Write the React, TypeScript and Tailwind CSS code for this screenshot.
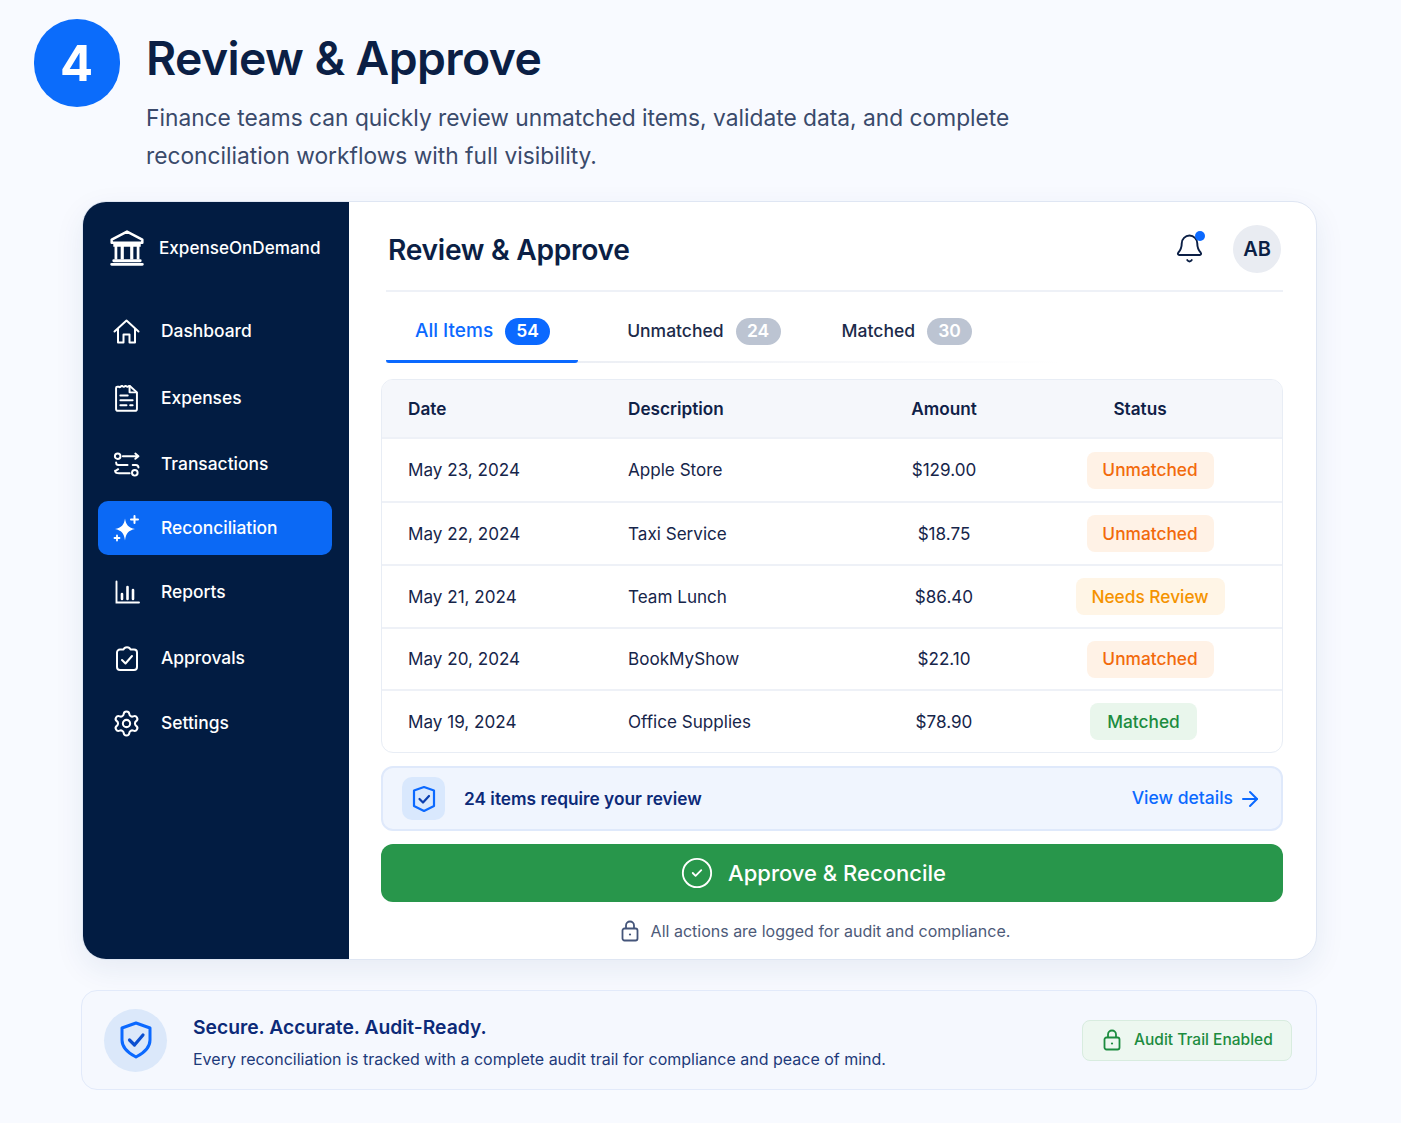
import { ArrowRight, Bell, CircleCheck, Settings } from "lucide-react";
import type { ReactNode } from "react";

function BankIcon() {
  return (
    <svg className="w-[38px] h-[38px] text-white" viewBox="0 0 36 36" fill="none" stroke="currentColor" strokeWidth="2.4">
      <path d="M18 2.5 L32.5 10 V13 H3.5 V10 Z" strokeLinejoin="round" />
      <path d="M5 15.5 H31" />
      <path d="M7.5 16 V29 M28.5 16 V29" strokeWidth="2.6" />
      <path d="M13.5 16 V29 M22.5 16 V29" strokeWidth="3" />
      <path d="M5.5 30 H30.5 M3.5 33.5 H32.5" strokeWidth="2.8" strokeLinecap="round" />
    </svg>
  );
}

function HouseIcon() {
  return (
    <svg className="w-[27px] h-[27px] text-white" viewBox="0 0 27 27" fill="none" stroke="currentColor" strokeWidth="2" strokeLinecap="round" strokeLinejoin="round">
      <path d="M1.5 13.5 L13.5 2.5 L25.5 13.5" />
      <path d="M5 11 V24.5 H10.5 V16.5 H16.5 V24.5 H22 V11" />
    </svg>
  );
}

function ExpenseIcon() {
  return (
    <svg className="w-[25px] h-[27px] text-white" viewBox="3 2.5 20 22" fill="none" stroke="currentColor" strokeWidth="1.6" strokeLinecap="round" strokeLinejoin="round">
      <path d="M5.5 4 H7 C7.5 5 8.5 3.2 9.5 3.2 C10.5 5 11.5 3.2 12.5 3.2 C13.5 5 14.5 3.2 15.5 3.2 L21.5 8.5 V22 a1.5 1.5 0 0 1 -1.5 1.5 H6 A1.5 1.5 0 0 1 4.5 22 V5 A1 1 0 0 1 5.5 4 Z" />
      <path d="M15.5 3.5 V8.5 H21" />
      <path d="M8 11 H14 M8 15 H18 M8 19 H13 M16 19 H18" />
    </svg>
  );
}

function TransactionsIcon() {
  return (
    <svg className="w-[27px] h-[27px] text-white" viewBox="0 0 26 26" fill="none" stroke="currentColor" strokeWidth="1.9" strokeLinecap="round" strokeLinejoin="round">
      <circle cx="4.5" cy="5" r="2.7" />
      <path d="M9.5 5 H24.5 M21.5 2.5 L24.5 5 L21.5 7.5" />
      <path d="M3 11 C3 14 5 13.5 9 13.5 H14" />
      <path d="M19 13.5 H22 C24 13.5 24.5 15 24.5 16" />
      <path d="M2 19 C2 21.5 4 21.5 6 21.5 H16 M5 17.5 L2 19.5" />
      <circle cx="21" cy="21" r="2.7" />
    </svg>
  );
}

function SparkleIcon() {
  return (
    <svg className="w-[27px] h-[27px] text-white" viewBox="0 0 27 27" fill="currentColor">
      <path d="M12 3.5 C13 10 15.5 12.5 22 14 C15.5 15.5 13 18 12 25.5 C11 18 8.5 15.5 2 14 C8.5 12.5 11 10 12 3.5 Z" />
      <path d="M21.5 1 V8 M18 4.5 H25" stroke="currentColor" strokeWidth="2" strokeLinecap="round" />
      <path d="M4 20.5 V25.5 M1.5 23 H6.5" stroke="currentColor" strokeWidth="1.8" strokeLinecap="round" />
    </svg>
  );
}

function ReportsIcon() {
  return (
    <svg className="w-[26px] h-[26px] text-white" viewBox="0 0 26 26" fill="none" stroke="currentColor" strokeWidth="1.9" strokeLinecap="round">
      <path d="M2.5 2.5 V23.5 H25" />
      <path d="M8 15 V20 M13.5 8 V20 M19 11 V20" strokeWidth="2.6" />
    </svg>
  );
}

function ApprovalsIcon() {
  return (
    <svg className="w-[26px] h-[27px] text-white" viewBox="0 0 26 27" fill="none" stroke="currentColor" strokeWidth="2" strokeLinecap="round" strokeLinejoin="round">
      <path d="M8 4.5 H9.5 C10.5 1.5 15.5 1.5 16.5 4.5 H20 A3 3 0 0 1 23 7.5 V22 A3 3 0 0 1 20 25 H6 A3 3 0 0 1 3 22 V7.5 A3 3 0 0 1 6 4.5 Z" />
      <path d="M8 15 L11.5 18.5 L18 11" />
    </svg>
  );
}

function BellIcon() {
  return (
    <div className="relative w-7 h-7 flex items-center justify-center">
      <Bell className="w-[31px] h-[31px] shrink-0 text-[#0b1f45]" strokeWidth={1.5} />
      <div className="absolute -top-[3px] right-[-2px] w-[10px] h-[10px] rounded-full bg-[#0b69ff]" />
    </div>
  );
}

function LockIcon({ className }: { className: string }) {
  return (
    <svg className={className} viewBox="0 0 18 22" fill="none" stroke="currentColor" strokeWidth="1.8" strokeLinejoin="round">
      <rect x="1.5" y="8.5" width="15" height="12" rx="2" />
      <path d="M5 8.5 V5.5 a4 4 0 0 1 8 0 V8.5" />
      <circle cx="9" cy="14.5" r="1.1" fill="currentColor" stroke="none" />
    </svg>
  );
}

const navItems: { label: string; icon: ReactNode; gap: string }[] = [
  { label: "Dashboard", icon: <HouseIcon />, gap: "mt-[37px]" },
  { label: "Expenses", icon: <ExpenseIcon />, gap: "mt-[13px]" },
  { label: "Transactions", icon: <TransactionsIcon />, gap: "mt-[12px]" },
  { label: "Reconciliation", icon: <SparkleIcon />, gap: "mt-[10px]" },
  { label: "Reports", icon: <ReportsIcon />, gap: "mt-[10px]" },
  { label: "Approvals", icon: <ApprovalsIcon />, gap: "mt-[12px]" },
  { label: "Settings", icon: <Settings className="w-[29px] h-[29px] shrink-0 text-white" strokeWidth={1.7} />, gap: "mt-[11px]" },
];

const rows = [
  { date: "May 23, 2024", desc: "Apple Store", amount: "$129.00", status: "Unmatched", h: "h-[64px]" },
  { date: "May 22, 2024", desc: "Taxi Service", amount: "$18.75", status: "Unmatched", h: "h-[63px]" },
  { date: "May 21, 2024", desc: "Team Lunch", amount: "$86.40", status: "Needs Review", h: "h-[63px]" },
  { date: "May 20, 2024", desc: "BookMyShow", amount: "$22.10", status: "Unmatched", h: "h-[62px]" },
  { date: "May 19, 2024", desc: "Office Supplies", amount: "$78.90", status: "Matched", h: "h-[63px]" },
];

function StatusPill({ status }: { status: string }) {
  if (status === "Needs Review") {
    return <span className="flex items-center justify-center w-[149px] h-[37px] rounded-lg bg-[#fff5e6] text-[#f59300] text-[17.3px] font-medium">{status}</span>;
  }
  if (status === "Matched") {
    return <span className="flex items-center justify-center w-[107px] h-[37px] rounded-lg bg-[#e9f6ec] text-[#1c8c3f] text-[17.3px] font-medium mr-[13px]">{status}</span>;
  }
  return <span className="flex items-center justify-center w-[127px] h-[37px] rounded-lg bg-[#fff2e6] text-[#f26a0c] text-[17.3px] font-medium">{status}</span>;
}

function Tab({ label, count, active }: { label: string; count: string; active?: boolean }) {
  return (
    <div className="flex items-center gap-[12px]">
      <span className={active ? "text-[19px] font-medium text-[#0b69ff]" : "text-[17.5px] font-medium text-[#1c2b4a]"}>{label}</span>
      <span className={`flex items-center justify-center w-[45px] h-[27px] rounded-full text-[17.5px] font-semibold text-white ${active ? "bg-[#0b69ff]" : "bg-[#bcc4d2]"}`}>{count}</span>
    </div>
  );
}

export default function App() {
  return (
    <div className="w-[1401px] h-[1123px] overflow-hidden bg-[#f8faff] font-['Inter',sans-serif] pt-[19px]">
      {/* Header */}
      <div className="flex pl-[33.5px]">
        <div className="w-[86px] h-[88px] rounded-full bg-[#0b6cfb] flex items-center justify-center text-white text-[49px] font-bold leading-none">4</div>
        <div className="ml-[26.5px]">
          <h1 className="text-[46.3px] font-semibold leading-[56px] mt-[11px] tracking-[-0.6px] text-[#0b1f45]">Review &amp; Approve</h1>
          <p className="text-[22.75px] leading-[38px] mt-[13px] w-[900px] text-[#3a4a6b]">
            Finance teams can quickly review unmatched items, validate data, and complete reconciliation workflows with full visibility.
          </p>
        </div>
      </div>

      {/* Main card */}
      <div className="flex ml-[82px] mt-[26px] w-[1235px] h-[759px] rounded-[24px] bg-white border border-[#dfe6f3] shadow-[0_10px_30px_rgba(30,60,120,0.08)] overflow-hidden">
        {/* Sidebar */}
        <aside className="w-[266px] shrink-0 bg-[#021c42] pt-[27px]">
          <div className="flex items-center pl-[25px] gap-[13px] h-[38px]">
            <BankIcon />
            <span className="text-white text-[17.1px] font-medium">ExpenseOnDemand</span>
          </div>
          <nav className="flex flex-col">
            {navItems.map((item) => {
              const active = item.label === "Reconciliation";
              return (
                <div
                  key={item.label}
                  className={`flex items-center h-[54px] ml-[15px] w-[234px] pl-[15px] gap-[21px] rounded-[10px] ${item.gap} ${active ? "bg-[#0b69f5]" : ""}`}
                >
                  <div className="w-[27px] flex justify-center">{item.icon}</div>
                  <span className="text-[17.4px] font-medium text-white">{item.label}</span>
                </div>
              );
            })}
          </nav>
        </aside>

        {/* Content */}
        <main className="flex-1 min-w-0 pl-[32px] pr-[33px]">
          <div className="flex items-center justify-between h-[90px] ml-[5px] border-b-2 border-[#eef1f7]">
            <h2 className="ml-[2px] text-[28.2px] font-semibold text-[#0b1f45] tracking-[-0.3px] mt-[8px]">Review &amp; Approve</h2>
            <div className="flex items-center gap-[30px] mr-[2px] mt-[4px]">
              <BellIcon />
              <div className="w-[48px] h-[48px] mt-[2px] rounded-full bg-[#e9ecf2] flex items-center justify-center text-[20px] font-semibold text-[#0b1f45]">AB</div>
            </div>
          </div>

          {/* Tabs */}
          <div className="relative ml-[5px] h-[71px] flex items-center pt-[7px]">
            <div className="absolute left-0 bottom-0 w-[675px] h-[2px] bg-gradient-to-r from-[#e4e8f0] to-transparent" />
            <div className="absolute left-0 bottom-0 w-[192px] h-[3px] rounded-b bg-[#0b69ff]" />
            <div className="flex items-center pl-[29px]">
              <Tab label="All Items" count="54" active />
              <div className="w-[77px]" />
              <Tab label="Unmatched" count="24" />
              <div className="w-[61px]" />
              <Tab label="Matched" count="30" />
            </div>
          </div>

          {/* Table */}
          <div className="mt-[16px] rounded-xl border border-[#e8edf5] overflow-hidden">
            <div className="grid grid-cols-[246px_206px_168px_1fr] items-center h-[57px] bg-[#f5f7fb] pl-[26px] text-[17.2px] font-semibold text-[#0f2147]">
              <span>Date</span>
              <span className="-ml-[26px]">Description</span>
              <span className="text-center">Amount</span>
              <span className="text-center pr-[30px]">Status</span>
            </div>
            {rows.map((row) => (
              <div key={row.date} className={`grid grid-cols-[246px_206px_168px_1fr] items-center pl-[26px] border-t-2 border-[#eef1f7] text-[17.1px] text-[#16254a] ${row.h}`}>
                <span>{row.date}</span>
                <span className="-ml-[26px]">{row.desc}</span>
                <span className="text-center">{row.amount}</span>
                <div className="flex justify-center pr-[10px]">
                  <StatusPill status={row.status} />
                </div>
              </div>
            ))}
          </div>

          {/* Review notice */}
          <div className="mt-[13px] h-[65px] flex items-center justify-between rounded-xl border-2 border-[#dfe9fb] bg-[#f0f5fe] pl-[19px] pr-[19px]">
            <div className="flex items-center gap-[19px]">
              <div className="w-[43px] h-[43px] rounded-[10px] bg-[#d9e8fd] flex items-center justify-center">
                <svg className="w-[26px] h-[28px] text-[#0b69ff]" viewBox="0 0 26 28" fill="none" stroke="currentColor" strokeWidth="2.2" strokeLinejoin="round" strokeLinecap="round">
                  <path d="M13 2 L23 5.5 V21 L13 26 L3 21 V5.5 Z" />
                  <path d="M8.5 14 L12 17.5 L18 11" stroke="#0b3fb0" />
                </svg>
              </div>
              <span className="text-[17.3px] font-semibold text-[#0c2a78]">24 items require your review</span>
            </div>
            <div className="flex items-center gap-[5px] text-[17.5px] font-medium text-[#0b69ff]">
              View details
              <ArrowRight className="w-[24px] h-[24px]" strokeWidth={2} />
            </div>
          </div>

          {/* Approve */}
          <div className="mt-[13px] h-[58px] rounded-xl bg-[#28964b] flex items-center justify-center gap-[14px] pr-[38px] text-white text-[22px] font-medium">
            <CircleCheck className="w-[34px] h-[34px]" strokeWidth={1.3} />
            Approve &amp; Reconcile
          </div>

          <div className="mt-[17px] flex items-center justify-center gap-[12px] pr-[33px] text-[16px] text-[#4d5a78]">
            <LockIcon className="w-[18px] h-[22px] text-[#44557a]" />
            All actions are logged for audit and compliance.
          </div>
        </main>
      </div>

      {/* Footer banner */}
      <div className="flex items-center justify-between ml-[81px] mt-[30px] w-[1236px] h-[100px] rounded-2xl border border-[#e2eafa] bg-[#f5f8fe] pl-[22px] pr-[24px]">
        <div className="flex items-center gap-[26px]">
          <div className="w-[63px] h-[63px] rounded-full bg-[#dbe8fa] flex items-center justify-center">
            <svg className="w-[32px] h-[38px] text-[#0b69ff]" viewBox="0 0 32 38" fill="none" stroke="currentColor" strokeWidth="3" strokeLinejoin="round" strokeLinecap="round">
              <path d="M16 2 L30 7 V19 C30 28 22 33 16 36 C10 33 2 28 2 19 V7 Z" />
              <path d="M9.5 19 L14.5 24 L23 14" stroke="#0b4fd0" strokeWidth="3.2" />
            </svg>
          </div>
          <div className="pt-[3px]">
            <div className="text-[19.3px] font-semibold leading-[26px] text-[#0c2a78]">Secure. Accurate. Audit-Ready.</div>
            <div className="mt-[8px] text-[16px] leading-[22px] text-[#1d3a7a]">Every reconciliation is tracked with a complete audit trail for compliance and peace of mind.</div>
          </div>
        </div>
        <div className="flex items-center gap-[13px] w-[210px] h-[41px] pl-[20px] rounded-lg border border-[#d8ecdf] bg-[#edf7f0] text-[15.5px] font-medium text-[#1c8c3f]">
          <LockIcon className="w-[18px] h-[22px]" />
          Audit Trail Enabled
        </div>
      </div>
    </div>
  );
}
